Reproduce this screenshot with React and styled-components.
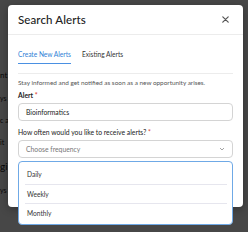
import React, { useState } from "react";
import styled, { createGlobalStyle } from "styled-components";

const GlobalStyle = createGlobalStyle`
  html, body {
    margin: 0;
    padding: 0;
    width: 248px;
    height: 232px;
    overflow: hidden;
    font-family: Lato, "Liberation Sans", sans-serif;
  }
`;

const Page = styled.div`
  position: relative;
  width: 248px;
  height: 232px;
  background: #fff;
  overflow: hidden;
`;

const BackList = styled.div`
  display: flex;
  flex-direction: column;
  gap: 14px;
  padding: 70px 0 0 0;
  font-size: 8px;
  color: #222;
`;

const BackLine = styled.div`
  font-size: ${(p) => p.size || 8}px;
`;

const Overlay = styled.div`
  position: absolute;
  inset: 0;
  background: rgba(0, 0, 0, 0.72);
  padding: 5px 5px 0 8px;
`;

const Modal = styled.div`
  width: 235px;
  height: 202px;
  background: #fff;
  border-radius: 4px;
  box-shadow: 0 2px 8px rgba(0, 0, 0, 0.3);
  display: flex;
  flex-direction: column;
`;

const Header = styled.div`
  display: flex;
  align-items: center;
  justify-content: space-between;
  height: 29px;
  padding: 0 14px 0 10px;
  border-bottom: 1px solid #ececec;
`;

const Title = styled.div`
  font-size: 11.5px;
  font-weight: 500;
  color: #222;
  letter-spacing: 0.1px;
`;

const Close = styled.button`
  border: 0;
  background: none;
  padding: 0;
  display: flex;
`;

const Body = styled.div`
  padding: 11px 10px 0 10px;
  display: flex;
  flex-direction: column;
`;

const Tabs = styled.div`
  display: flex;
  gap: 11px;
  padding-top: 3px;
  border-bottom: 1px solid #ececec;
  padding-bottom: 9px;
`;

const Tab = styled.div`
  font-size: 6.6px;
  color: ${(p) => (p.active ? "#2f7fd6" : "#333")};
  padding-bottom: 4px;
  border-bottom: 1.5px solid ${(p) => (p.active ? "#4a90e2" : "transparent")};
  line-height: 10px;
`;

const Intro = styled.p`
  margin: 5px 0 0 0;
  font-size: 6.4px;
  color: #555;
  line-height: 8px;
`;

const Label = styled.div`
  font-size: 6.8px;
  font-weight: ${(p) => (p.bold ? 700 : 400)};
  color: #222;
  margin-top: ${(p) => p.top}px;
  line-height: 9px;
`;

const Req = styled.span`
  color: #e0433b;
`;

const Field = styled.div`
  position: relative;
  margin-top: 3px;
  height: 18px;
  border: 1px solid #d4d4d4;
  border-radius: 4px;
  display: flex;
  align-items: center;
  justify-content: space-between;
  padding: 0 7px 0 7px;
  font-size: 6.8px;
  color: ${(p) => (p.placeholder ? "#777" : "#222")};
  box-sizing: border-box;
`;

const Menu = styled.ul`
  position: absolute;
  left: -1px;
  right: -1px;
  top: 20px;
  margin: 0;
  padding: 3px 0 0 0;
  list-style: none;
  background: #fff;
  border: 1.5px solid #6fa9e6;
  border-radius: 4px;
  box-sizing: border-box;
  height: 64px;
  z-index: 2;
`;

const Option = styled.li`
  margin: 0 5px 0 6px;
  padding-left: 2px;
  height: 18.5px;
  display: flex;
  align-items: center;
  font-size: 6.6px;
  color: #333;
  border-bottom: ${(p) => (p.last ? "none" : "1px solid #e6e6ee")};
`;

export default function App() {
  const [tab] = useState("create");
  const options = ["Daily", "Weekly", "Monthly"];

  return (
    <>
      <GlobalStyle />
      <Page>
        <BackList>
          <BackLine>nt</BackLine>
          <BackLine size={7}>ys a</BackLine>
          <BackLine size={7}>c a</BackLine>
          <BackLine size={7}>it</BackLine>
          <BackLine size={10}>gi</BackLine>
          <BackLine size={7}>ys ago</BackLine>
        </BackList>
        <Overlay>
          <Modal>
            <Header>
              <Title>Search Alerts</Title>
              <Close>
                <svg width="7" height="7" viewBox="0 0 7 7">
                  <path
                    d="M0.8 0.8L6.2 6.2M6.2 0.8L0.8 6.2"
                    stroke="#555"
                    strokeWidth="1.2"
                    strokeLinecap="round"
                  />
                </svg>
              </Close>
            </Header>
            <Body>
              <Tabs>
                <Tab active={tab === "create"}>Create New Alerts</Tab>
                <Tab active={tab === "existing"}>Existing Alerts</Tab>
              </Tabs>
              <Intro>
                Stay informed and get notified as soon as a new opportunity
                arises.
              </Intro>
              <Label bold top={4}>
                Alert <Req>*</Req>
              </Label>
              <Field>Bioinformatics</Field>
              <Label top={7}>
                How often would you like to receive alerts? <Req>*</Req>
              </Label>
              <Field placeholder>
                Choose frequency
                <svg width="6" height="4" viewBox="0 0 6 4">
                  <path d="M1 1L3 3L5 1" stroke="#999" strokeWidth="0.9" fill="none" />
                </svg>
                <Menu>
                  {options.map((o, i) => (
                    <Option key={o} last={i === options.length - 1}>
                      {o}
                    </Option>
                  ))}
                </Menu>
              </Field>
            </Body>
          </Modal>
        </Overlay>
      </Page>
    </>
  );
}
